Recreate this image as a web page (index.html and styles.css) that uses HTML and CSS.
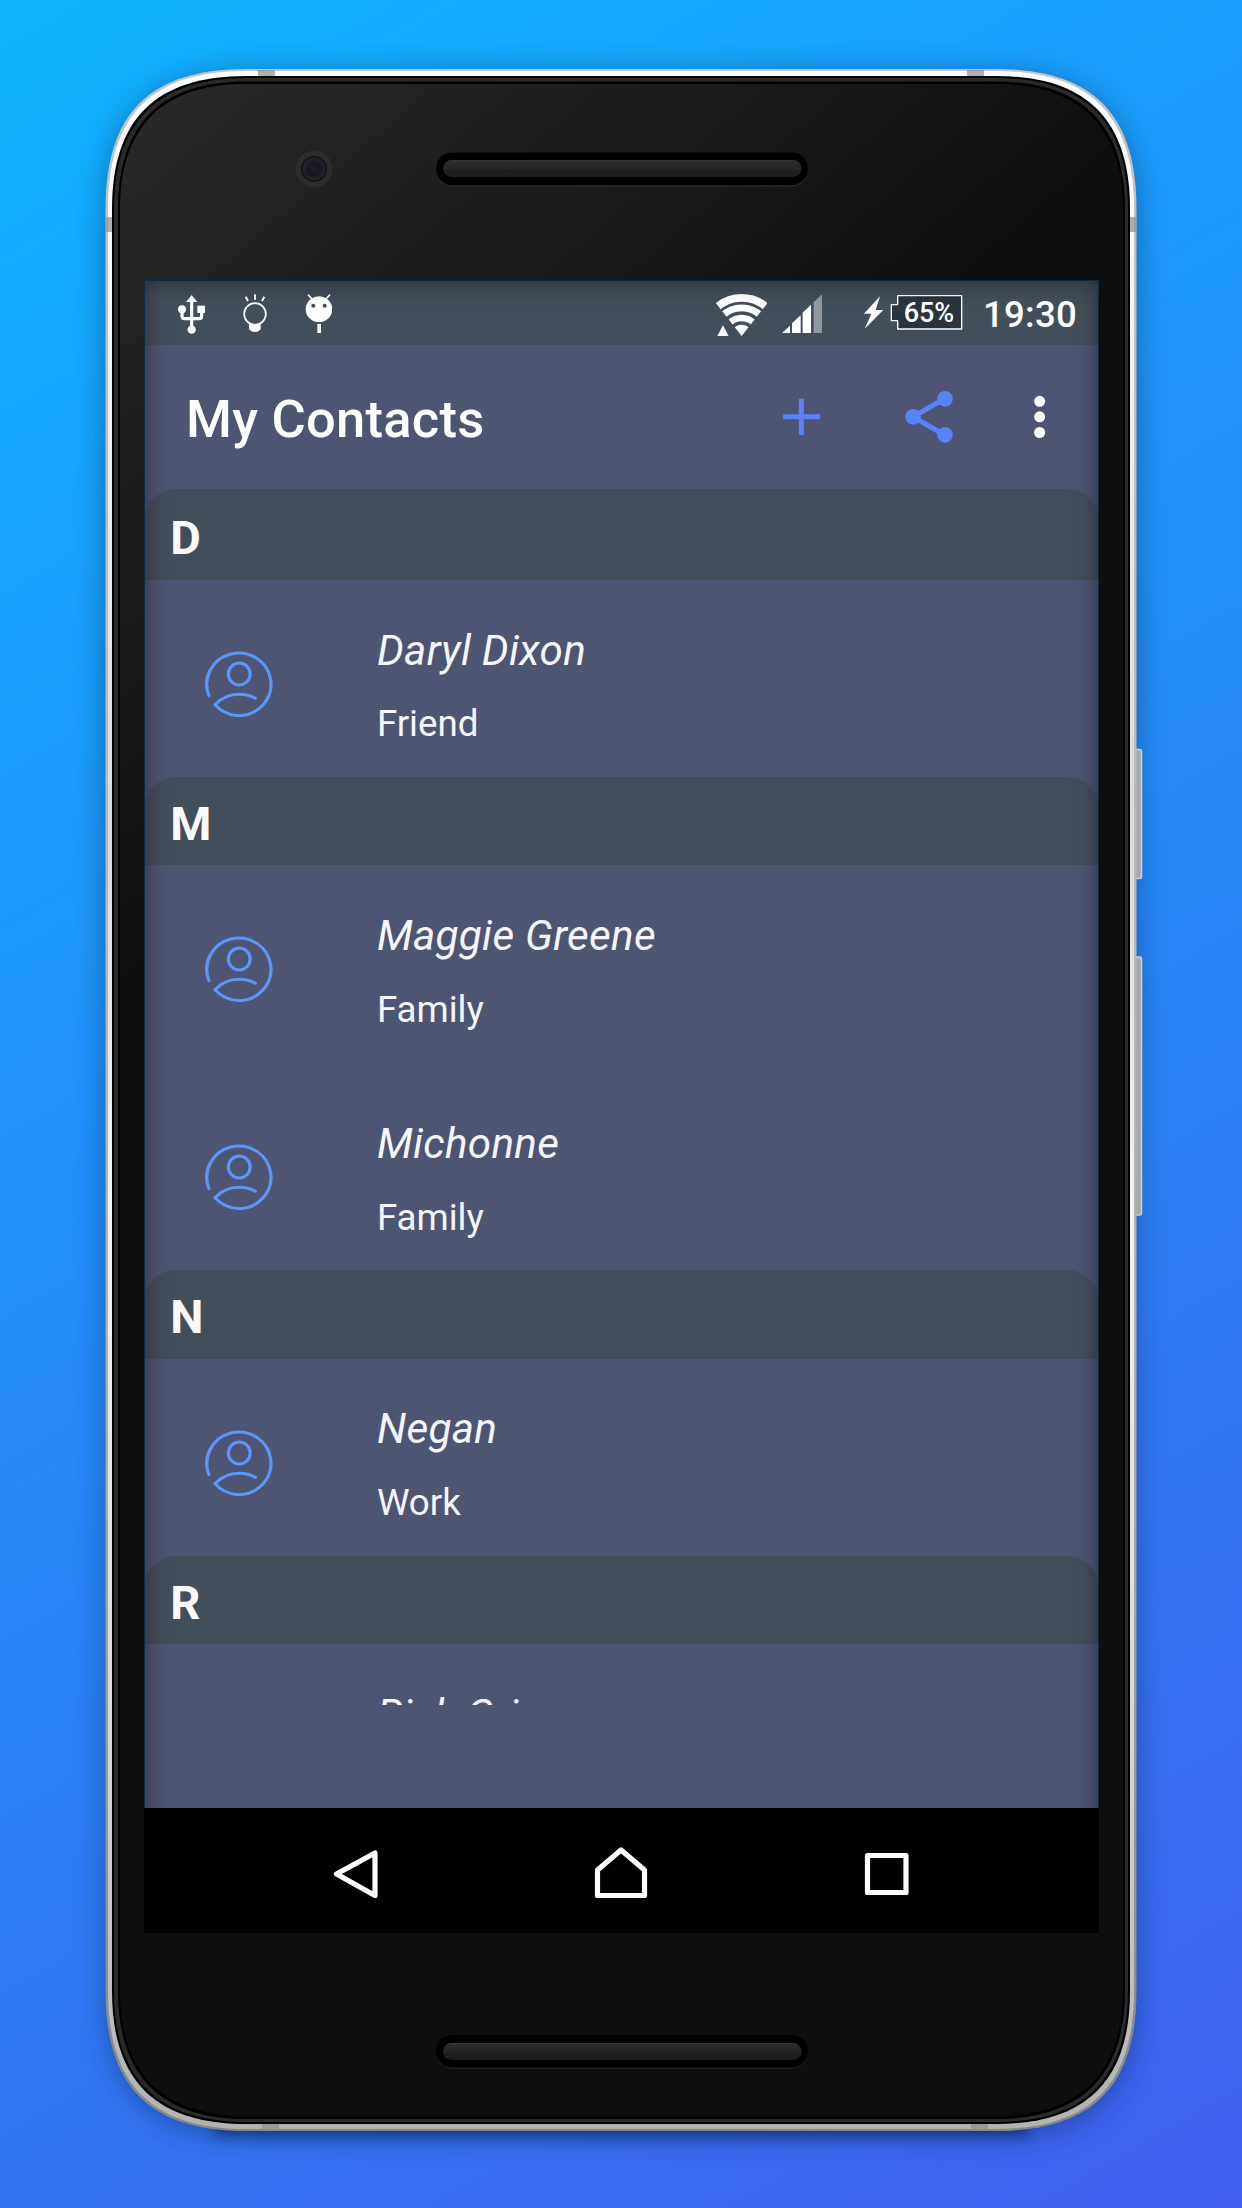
FILE: index.html
```html
<!DOCTYPE html>
<html lang="en">
<head>
<meta charset="utf-8">
<title>My Contacts</title>
<link rel="stylesheet" href="styles.css">
</head>
<body>
<svg class="symbols" width="0" height="0">
  <defs>
    <symbol id="avatar" viewBox="182 152 191 199" preserveAspectRatio="none">
      <path d="M193 286A90 94 0 1 1 278 346Q236 345 210 313Q238 282 278 282Q303 282 323 294" stroke-linejoin="round" stroke-linecap="round"/>
      <ellipse cx="278" cy="221" rx="30.500" ry="33"/>
    </symbol>
  </defs>
</svg>

<!-- Device shell -->
<svg class="device" width="1242" height="2208" viewBox="0 0 1242 2208">
  <defs>
    <linearGradient id="metal" x1="0" y1="0" x2="0" y2="1">
      <stop offset="0" stop-color="#fff"/><stop offset=".2" stop-color="#ececec"/><stop offset=".37" stop-color="#dadada"/><stop offset=".55" stop-color="#f4f4f4"/><stop offset=".8" stop-color="#d8d8d8"/><stop offset="1" stop-color="#b2b2b2"/>
    </linearGradient>
    <linearGradient id="edge" x1="0" y1="0" x2="0" y2="1">
      <stop offset="0" stop-color="#c4c4c4"/><stop offset=".6" stop-color="#b2b2b2"/><stop offset="1" stop-color="#868686"/>
    </linearGradient>
    <linearGradient id="glass" gradientUnits="userSpaceOnUse" x1="140" y1="120" x2="560" y2="620">
      <stop offset="0" stop-color="#282828"/><stop offset="1" stop-color="#0e0e0e"/>
    </linearGradient>
    <linearGradient id="grille" x1="0" y1="0" x2="0" y2="1">
      <stop offset="0" stop-color="#3a3a3a"/><stop offset=".12" stop-color="#2b2b2b"/><stop offset=".5" stop-color="#262626"/><stop offset=".6" stop-color="#1f1f1f"/><stop offset="1" stop-color="#1d1d1d"/>
    </linearGradient>
    <radialGradient id="lens"><stop offset="0" stop-color="#211b38"/><stop offset=".5" stop-color="#19171f"/><stop offset=".8" stop-color="#26232b"/><stop offset="1" stop-color="#0c0b10"/></radialGradient>
    <filter id="soft" x="-10%" y="-10%" width="120%" height="120%"><feGaussianBlur stdDeviation="15"/></filter>
    <filter id="tight" x="-10%" y="-200%" width="120%" height="500%"><feGaussianBlur stdDeviation="7"/></filter>
    <path id="body" d="M105.500 209C105.500 113 150 69 246 69H996C1092 69 1136.500 113 1136.500 209V1991C1136.500 2087 1092 2131 996 2131H246C150 2131 105.500 2087 105.500 1991Z"/>
  </defs>
  <use href="#body" fill="#06224c" opacity=".42" filter="url(#soft)" transform="translate(0 5)"/>
  <rect x="215" y="2112" width="812" height="22" fill="#06132f" opacity=".6" filter="url(#tight)"/>
  <g fill="#a9a9a9" stroke="#cfcfcf" stroke-width="1.500">
    <rect x="1130" y="749.500" width="11.500" height="129" rx="2"/>
    <rect x="1130" y="957" width="11.500" height="258" rx="2"/>
  </g>
  <use href="#body" fill="url(#edge)"/>
  <path fill="url(#metal)" d="M108 209C108 115 152 71 246 71H996C1090 71 1134 115 1134 209V1991C1134 2085 1090 2129 996 2129H246C152 2129 108 2085 108 1991Z"/>
  <path fill="#8f8f8f" opacity=".7" d="M258 70h17v8h-17zM967 70h17v8h-17zM106 217h7v15h-7zM1129 217h7v15h-7zM262 2122h17v8h-17zM971 2122h17v8h-17z"/>
  <path fill="#000" d="M112 209C112 119 156 76 246 76H996C1086 76 1130 119 1130 209V1991C1130 2081 1086 2124 996 2124H246C156 2124 112 2081 112 1991Z"/>
  <path fill="#2a2a2a" d="M114 209C114 121 158 78 246 78H996C1084 78 1128 121 1128 209V1991C1128 2079 1084 2122 996 2122H246C158 2122 114 2079 114 1991Z"/>
  <path fill="#000" d="M118 209C118 124 161 81.500 246 81.500H996C1081 81.500 1125 124 1125 209V1991C1125 2076 1081 2119 996 2119H246C161 2119 118 2076 118 1991Z"/>
  <path fill="url(#glass)" d="M120 209C120 126 163 84 246 84H996C1079 84 1123 126 1123 209V1991C1123 2074 1079 2116 996 2116H246C163 2116 120 2074 120 1991Z"/>
  <circle cx="314" cy="169" r="18.500" fill="#2d2d2d"/>
  <circle cx="314" cy="169" r="13" fill="url(#lens)"/>
  <rect x="436" y="154" width="372" height="32.500" rx="16" fill="#262626"/>
  <rect x="436" y="152.500" width="372" height="32.500" rx="16" fill="#000"/>
  <rect x="443" y="160" width="358.500" height="17" rx="8.500" fill="url(#grille)"/>
  <rect x="436" y="2036.500" width="372" height="32.500" rx="16" fill="#1e1e1e"/>
  <rect x="436" y="2035" width="372" height="32.500" rx="16" fill="#000"/>
  <rect x="443" y="2043" width="358.500" height="17" rx="8.500" fill="url(#grille)"/>
</svg>

<main class="screen">
  <div class="status">
    <svg class="usb" viewBox="113 30 82 138"><g fill="#fff"><path d="M154 45l17 21h-34z"/><circle cx="125" cy="88" r="12"/><path d="M171 77h24v22h-24z"/><circle cx="154" cy="149" r="12.500"/></g><path d="M154 60V145M125 88V108Q125 116 133 116H176Q184 116 184 108V90" fill="none" stroke="#fff" stroke-width="9.500"/></svg>
    <svg class="bulb" viewBox="309 30 72 138"><g fill="none" stroke="#fff" stroke-width="5"><circle cx="345" cy="102" r="32.500"/><path d="M317 50l7 13M345 43v16M373 50l-7 13" stroke-width="6"/></g><path fill="#fff" d="M327 129Q345 138 362 129V146Q359 155 345 156Q331 155 327 146Z"/></svg>
    <svg class="bug" viewBox="494 30 83 138"><path fill="#fff" fill-rule="evenodd" d="M536 49a40 39 0 1 0 .01 0zM519 71a6 6 0 1 1-.01 0zM553 71a6 6 0 1 1-.01 0zM531 132h11v27h-11z"/><path d="M503 44l12 13M569 44l-12 13" stroke="#fff" stroke-width="5"/></svg>
    <span class="spacer"></span>
    <svg class="wifi" viewBox="107 30 154 138"><clipPath id="fan"><path d="M184 168L107 70V30H261V70Z"/></clipPath><g clip-path="url(#fan)" fill="none" stroke="#fff"><circle cx="184" cy="166" r="32" fill="#fff" stroke="none"/><circle cx="184" cy="166" r="112.500" stroke-width="23"/><circle cx="184" cy="166" r="82.500" stroke-width="20"/><circle cx="184" cy="166" r="52" stroke-width="19"/></g><path fill="#fff" d="M128 136l17 32h-34z"/></svg>
    <svg class="signal" viewBox="306 30 121 138"><path fill="#fff" d="M306 159l24-22v22zM336 130l26-24v53h-26zM368 98l25-24v85h-25z"/><path fill="#91989f" d="M401 67l25-24v116h-25z"/></svg>
    <svg class="bolt" viewBox="551 30 59 138"><path fill="#fff" d="M599 49L551 101H573L553 146L609 90H586Z"/></svg>
    <div class="battery"><svg viewBox="630 30 217 138"><path d="M653 47H845V147H653V122H634V74H653Z" fill="#2b333d" stroke="#fff" stroke-width="4" stroke-linejoin="round"/></svg><span class="percent">65%</span></div>
    <time class="clock">19:30</time>
  </div>

  <header class="toolbar">
    <h1 class="title">My Contacts</h1>
    <svg class="add" viewBox="309 331 111 160"><path d="M309 411.500H420M364 357V466" stroke="#5a82fd" stroke-width="15"/></svg>
    <svg class="share" viewBox="674 331 144 160"><path d="M793 357L698 411.500L793 466" fill="none" stroke="#5a82fd" stroke-width="15"/><g fill="#5a82fd"><circle cx="698" cy="411.500" r="23.500"/><circle cx="794" cy="357.500" r="23.500"/><circle cx="794" cy="465.500" r="23.500"/></g></svg>
    <svg class="more" viewBox="1063 331 34 160"><g fill="#fff"><circle cx="1080" cy="365" r="16.500"/><circle cx="1080" cy="411.500" r="16.500"/><circle cx="1080" cy="458.500" r="16.500"/></g></svg>
  </header>

  <div class="list">
    <h2 class="letter first">D</h2>
    <article class="contact"><svg class="avatar"><use href="#avatar"/></svg><div><p class="name">Daryl Dixon</p><p class="group">Friend</p></div></article>
    <h2 class="letter">M</h2>
    <article class="contact spaced"><svg class="avatar"><use href="#avatar"/></svg><div><p class="name">Maggie Greene</p><p class="group">Family</p></div></article>
    <article class="contact"><svg class="avatar"><use href="#avatar"/></svg><div><p class="name">Michonne</p><p class="group">Family</p></div></article>
    <h2 class="letter">N</h2>
    <article class="contact"><svg class="avatar"><use href="#avatar"/></svg><div><p class="name">Negan</p><p class="group">Work</p></div></article>
    <h2 class="letter">R</h2>
    <article class="contact"><svg class="avatar"><use href="#avatar"/></svg><div><p class="name">Rick Grimes</p></div></article>
  </div>

  <nav class="nav">
    <svg class="back" width="46" height="61" viewBox="333 1840 46 61"><path d="M375 1853V1895.500L336.500 1874Z"/></svg>
    <svg class="home" width="54" height="61" viewBox="594 1840 54 61"><path d="M621 1850L644.500 1870V1895.500H597.500V1870Z"/></svg>
    <svg class="recent" width="46" height="61" viewBox="864 1840 46 61"><rect x="867.500" y="1855.500" width="38.500" height="37"/></svg>
  </nav>
  <div class="shade"></div>
</main>
</body>
</html>
```
FILE: styles.css
```css
* { box-sizing: border-box; }
body {
  margin: 0;
  width: 1242px;
  height: 2208px;
  overflow: hidden;
  padding: 280px 0 0 144px;
  background: linear-gradient(150deg, #0eb3ff 0%, #2888f8 52%, #3f5ff0 100%);
  font-family: Roboto, "Liberation Sans", sans-serif;
  color: #fff;
}
h1, h2, p { margin: 0; }
svg { display: block; flex: none; }
.symbols { position: absolute; }

/* Artwork behind the screen */
.device { position: absolute; left: 0; top: 0; }

.screen {
  position: relative;
  display: flex;
  flex-direction: column;
  width: 955px;
  height: 1653px;
  background: #4e5572;
}
/* Inner shadow that the bezel throws on the display */
.shade {
  position: absolute;
  inset: 0 0 65px;
  border: 1px solid #0c2b46;
  border-bottom: 0;
  box-shadow: inset 8px 0 22px -8px rgba(30, 32, 38, .45), inset -8px 0 22px -8px rgba(30, 32, 38, .45), inset 0 8px 20px -6px rgba(30, 32, 38, .4);
  clip-path: inset(0 0 60px);
}

.status {
  display: flex;
  align-items: center;
  height: 65px;
  padding: 1px 21px 0 33.67px;
  background: #434e5b;
}
.status svg { height: 46px; }
.usb { width: 27.33px; margin-right: 38px; }
.bulb { width: 24px; margin-right: 37.67px; }
.bug { width: 27.67px; }
.spacer { flex: 1; }
.wifi { width: 51.33px; margin-right: 15px; }
.signal { width: 40.33px; margin-right: 41.33px; }
.bolt { width: 19.67px; margin-right: 6.67px; }
.battery { display: grid; width: 72.33px; margin-right: 20.5px; }
.battery > * { grid-area: 1 / 1; }
.battery svg { width: 72.33px; }
.percent {
  align-self: center;
  padding-left: 13.5px;
  font-size: 27px;
  font-weight: 500;
  line-height: 32px;
}
.clock {
  width: 95px;
  padding-top: 3px;
  font-size: 36.5px;
  font-weight: 500;
  line-height: 40px;
  letter-spacing: .3px;
  white-space: nowrap;
}

.toolbar {
  display: flex;
  align-items: center;
  height: 144px;
  padding: 0 53.3px 0 42px;
}
.title {
  flex: 1;
  padding-top: 3px;
  font-size: 52.5px;
  font-weight: 500;
  line-height: 60px;
  letter-spacing: .25px;
}
.toolbar svg { height: 53.33px; }
.add { width: 37px; margin-right: 84.67px; }
.share { width: 48px; margin-right: 81.67px; }
.more { width: 11.33px; }

.list { height: 1215.7px; overflow: hidden; }
.letter {
  height: 88.5px;
  padding: 5.9px 0 0 26.2px;
  border-radius: 32px 32px 0 0;
  background: #434e5b;
  color: #fafafa;
  font-size: 47px;
  font-weight: 700;
  line-height: 82.6px;
}
.letter.first { height: 91px; padding-top: 8px; }
.contact {
  display: flex;
  gap: 103.7px;
  height: 197px;
  padding: 45.5px 0 0 61px;
  color: #f5f5fc;
}
.letter.first + .contact { height: 196.7px; }
.contact.spaced { margin-bottom: 11px; }
.avatar {
  width: 68.2px;
  height: 66.3px;
  margin-top: 25.7px;
  fill: none;
  stroke: #5998fa;
  stroke-width: 9;
}
.name { font-size: 42.2px; font-style: italic; line-height: 50.6px; letter-spacing: .32px; white-space: nowrap; }
.group { margin-top: 26.4px; font-size: 36.7px; line-height: 44px; }

.nav {
  display: flex;
  align-items: center;
  height: 125px;
  margin-top: auto;
  padding: 0 0 0 189px;
  background: #000;
}
.nav path, .nav rect { fill: none; stroke: #fff; stroke-width: 5.2; stroke-linejoin: round; }
.back { margin-right: 215px; }
.home { margin-right: 216px; }
```
